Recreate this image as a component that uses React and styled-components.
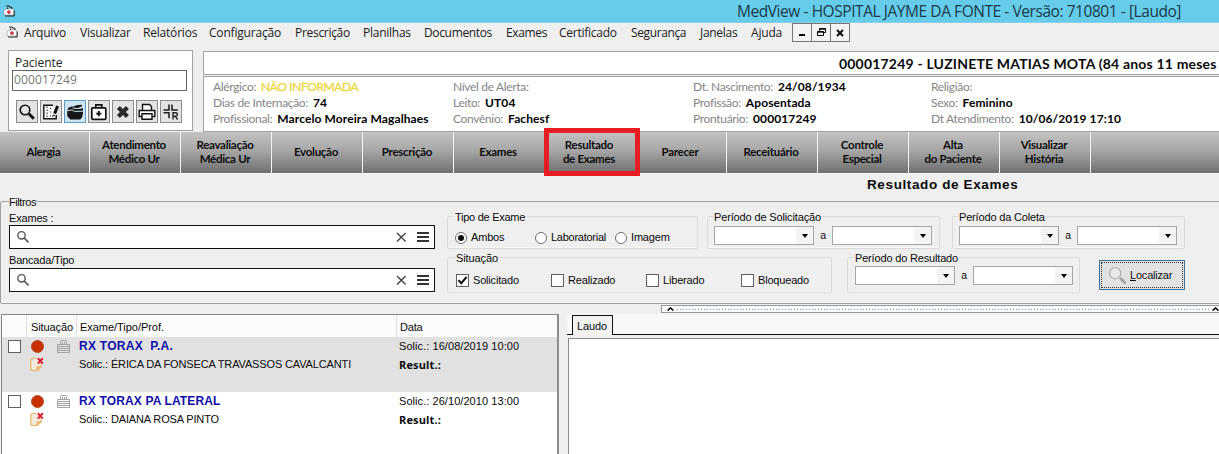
import React from 'react';
import styled, { createGlobalStyle, css } from 'styled-components';

const Global = createGlobalStyle`
  * { box-sizing: border-box; }
  html, body { margin: 0; padding: 0; background: #efefef; overflow: hidden; }
`;

const ui = '"Open Sans", "Noto Sans", sans-serif';
const humanist = 'Lato, "Open Sans", sans-serif';
const classic = '"Liberation Sans", Arial, sans-serif';

const Window = styled.main`
  width: 1219px;
  height: 454px;
  overflow: hidden;
  display: flex;
  flex-direction: column;
  background: #efefef;
  color: #0a0a0a;
  font: 11px/13px ${classic};
  letter-spacing: -0.18px;
  white-space: pre;
`;
const Label = styled.span`
  letter-spacing: ${p => p.$ls ?? -0.18}px;
`;

/* ---- title bar and menu ---- */
const TitleBar = styled.header`
  flex: none;
  display: flex;
  align-items: center;
  height: 23px;
  padding-left: 3px;
  background: #67cbea;
  border-bottom: 1px solid #8ccfe4;
`;
const Title = styled.h1`
  margin: 0 0 0 722px;
  font: 400 15.5px/22px ${ui};
  letter-spacing: -0.44px;
  color: #173c4b;
`;
const MenuBar = styled.nav`
  flex: none;
  display: flex;
  height: 27px;
  padding-left: 6px;
  font: 12px/20px ${ui};
  color: #1a1a1a;
`;
const MenuIcon = styled.span`
  width: 18px;
  padding-top: 3px;
  line-height: 0;
`;
const MenuItem = styled.span`
  width: ${p => p.$w}px;
  letter-spacing: ${p => p.$ls}px;
`;
const WindowButton = styled.span`
  display: grid;
  place-items: center;
  width: 20px;
  height: 19px;
  margin-right: -1px;
  border: 1px solid #777;
  background: #f3f3f3;
`;

/* ---- patient header ---- */
const PatientArea = styled.section`
  flex: none;
  display: flex;
  height: 82px;
`;
const PatientCard = styled.div`
  width: 185px;
  height: 81px;
  margin-left: 8px;
  padding: 5px 5px 0 3px;
  border: 1px solid #a2a2a2;
  background: #fff;
  font: 12px/14px ${ui};
`;
const PatientCaption = styled.div`
  padding-left: 3px;
  color: #222;
  letter-spacing: -0.05px;
`;
const PatientCode = styled.div`
  height: 21px;
  padding-left: 1px;
  border: 1px solid #666;
  color: #777;
  font: 12px/18px ${ui};
  letter-spacing: 0.14px;
`;
const ToolRow = styled.div`
  display: flex;
  gap: 2px;
  padding: 9px 0 0 4px;
`;
const ToolButton = styled.span`
  display: grid;
  place-items: center;
  width: 22px;
  height: 23px;
  border: 1px solid ${p => (p.$active ? '#5d9cc4' : '#8a8a8a')};
  background: ${p => (p.$active ? '#cfe4f3' : '#e3e3e3')};
`;
const PatientSummary = styled.div`
  flex: 1;
  margin: 1px 0 0 10px;
`;
const SummaryName = styled.div`
  height: 24px;
  padding-left: 635px;
  border: 1px solid #a2a2a2;
  border-right: 0;
  background: #fff;
  font: bold 14px/23px ${humanist};
  letter-spacing: 0.19px;
`;
const SummaryGrid = styled.div`
  display: grid;
  grid-template-columns: 240px 240px 238px 1fr;
  grid-auto-rows: 16.2px;
  height: 56px;
  margin-top: 1px;
  padding: 2px 0 0 9px;
  border: 1px solid #a2a2a2;
  border-right: 0;
  background: #fff;
  font: 12px/16px ${humanist};
  color: #000;
`;
const Fact = styled.div`
  display: flex;
  gap: 5px;
`;
const FactName = styled.span`
  color: #858585;
  letter-spacing: -0.33px;
`;
const FactValue = styled.span`
  font-weight: ${p => (p.$alert ? 400 : 700)};
  -webkit-text-stroke: ${p => (p.$alert ? '0.3px #ead73c' : '0')};
  color: ${p => (p.$alert ? '#ead73c' : '#000')};
  letter-spacing: ${p => (p.$alert ? -0.41 : 0.1)}px;
`;

/* ---- section tabs ---- */
const TabStrip = styled.nav`
  flex: none;
  display: flex;
  height: 42px;
  border-bottom: 1px solid #fafafa;
  background: linear-gradient(#c3c3c3, #a6a6a6 45%, #6f6f6f);
`;
const SectionTab = styled.div`
  position: relative;
  flex: none;
  display: grid;
  place-items: center;
  width: ${p => p.$w ?? 91}px;
  padding: 0 2px 1px 0;
  border-right: 1px solid #f4f4f4;
  text-align: center;
  font: bold 11.5px/14px ${humanist};
  letter-spacing: -0.28px;
  color: #0c0c0c;
  ${p => p.$marked && css`
    &::after {
      content: '';
      position: absolute;
      inset: -4px -5px -3px -1px;
      border: 5px solid #ec1c24;
      z-index: 1;
    }
  `}
`;
const PageTitle = styled.h2`
  flex: none;
  height: 19px;
  margin: 0;
  padding-left: 867px;
  font: bold 13.5px/21px ${classic};
  letter-spacing: 0.62px;
`;

/* ---- filters ---- */
const Group = styled.fieldset`
  flex: none;
  min-width: 0;
  margin: 0;
  padding: ${p => p.$pad ?? '2px 0 0 7px'};
  width: ${p => p.$w}px;
  height: ${p => p.$h ?? 39}px;
  border: 1px solid ${p => p.$line ?? '#dadada'};
  border-radius: 2px;
  box-shadow: inset 0 -1px 0 #f8f8f8;
`;
const Legend = styled.legend`
  padding: ${p => p.$top ?? 1}px 0 0 0;
  height: ${p => p.$h ?? 13}px;
`;
const FilterColumns = styled.div`
  display: flex;
  gap: 12px;
`;
const SearchColumn = styled.div`
  width: 426px;
  line-height: 14px;
`;
const SearchCaption = styled.div`
  height: ${p => p.$h}px;
  padding-top: ${p => p.$top}px;
`;
const SearchBox = styled.div`
  display: flex;
  align-items: center;
  height: 24px;
  padding: 0 5px 0 6px;
  border: 1px solid #111;
  background: #fff;
  & > :nth-child(2) { margin-left: auto; }
`;
const FilterRows = styled.div`
  display: flex;
  flex-direction: column;
  gap: 2px;
`;
const FilterRow = styled.div`
  display: flex;
  gap: ${p => p.$gap}px;
`;
const OptionRow = styled.div`
  display: flex;
  align-items: center;
  height: ${p => p.$h}px;
`;
const Option = styled.label`
  display: flex;
  align-items: center;
  gap: 4px;
  width: ${p => p.$w}px;
`;
const Radio = styled.span`
  display: grid;
  place-items: center;
  width: 12px;
  height: 12px;
  border: 1px solid #707070;
  border-radius: 50%;
  background: #fff;
  &::after {
    content: '';
    width: 6px;
    height: 6px;
    border-radius: 50%;
    background: ${p => (p.$on ? '#111' : 'transparent')};
  }
`;
const Check = styled.span`
  flex: none;
  display: grid;
  place-items: center;
  width: 13px;
  height: 13px;
  border: 1px solid #606060;
  background: #fff;
`;
const RangeRow = styled.div`
  display: flex;
  align-items: center;
  font-size: 10.5px;
`;
const Combo = styled.span`
  display: flex;
  justify-content: flex-end;
  width: 100px;
  height: 19px;
  border: 1px solid #a6a6a6;
  background: #fff;
`;
const ComboArrow = styled.span`
  display: grid;
  place-items: center;
  width: 17px;
  background: #f4f4f4;
  &::after {
    content: '';
    border: 3.5px solid transparent;
    border-top: 4px solid #000;
    border-bottom: 0;
  }
`;
const RangeWord = styled.span`
  width: 18px;
  text-align: center;
`;
const FindButton = styled.button`
  width: 86px;
  height: 30px;
  margin: 9px 0 0 4px;
  padding: 1px;
  border: 1px solid #3f6f94;
  background: #e2e2e2;
  font: inherit;
  color: #111;
  letter-spacing: -0.2px;
`;
const FindFocus = styled.span`
  display: flex;
  align-items: center;
  gap: 3px;
  height: 100%;
  padding-left: 6px;
  border: 1px dotted #333;
`;

/* ---- results ---- */
const Results = styled.section`
  flex: 1;
  display: flex;
  min-height: 0;
`;
const ExamTable = styled.div`
  flex: none;
  width: 558px;
  margin: 10px 0 0 1px;
  border: 1px solid #858585;
  border-right: 2px solid #8d8d8d;
  border-bottom: 0;
  background: #fff;
`;
const HeadRow = styled.div`
  display: flex;
  height: 22px;
  line-height: 25px;
  background: #fbfbfb;
`;
const HeadCell = styled.span`
  width: ${p => p.$w}px;
  padding-left: ${p => p.$pad}px;
  border-right: 1px solid ${p => (p.$last ? 'transparent' : '#e1e1e1')};
`;
const ExamRow = styled.div`
  display: grid;
  grid-template-columns: 22px 27px 22px 320px 1fr;
  grid-template-rows: 18px 19px;
  align-items: center;
  height: ${p => (p.$selected ? 55 : 54)}px;
  padding-left: 6px;
  background: ${p => (p.$selected ? '#e1e1e1' : '#fff')};
`;
const StatusDot = styled.span`
  justify-self: start;
  width: 13px;
  height: 13px;
  margin-left: 1px;
  border-radius: 50%;
  border: 1px solid #b84a26;
  background: #c93000;
`;
const ExamName = styled.strong`
  font-size: 12px;
  letter-spacing: ${p => p.$ls}px;
  color: #1010a8;
`;
const ResultLabel = styled.strong`
  font: bold 11px/14px ${ui};
  letter-spacing: 0.14px;
`;
const NoteSlot = styled.span`
  grid-column: 2 / span 2;
  line-height: 0;
`;
const ReportPane = styled.div`
  flex: 1;
  display: flex;
  flex-direction: column;
  margin-left: 8px;
`;
const Splitter = styled.div`
  flex: none;
  display: flex;
  align-items: center;
  justify-content: space-between;
  gap: 3px;
  height: 8px;
  margin: 1px 0 0 94px;
  padding-left: 5px;
  border: 1px solid #9a9a9a;
  border-right: 0;
  background: #f7f9fb;
`;
const Dots = styled.span`
  flex: 1;
  height: 1px;
  background: repeating-linear-gradient(90deg, #7f9fbe 0 1px, transparent 1px 3px);
`;
const ReportTabs = styled.div`
  flex: none;
  display: flex;
  height: 21px;
  margin-top: 1px;
  background: #f8f8f8;
  &::before { content: ''; width: 5px; border-bottom: 1px solid #111; }
  &::after { content: ''; flex: 1; border-bottom: 1px solid #111; }
`;
const ReportTab = styled.span`
  width: 41px;
  height: 20px;
  margin-top: 1px;
  padding-left: 4px;
  border: 1px solid #111;
  border-bottom: 0;
  background: #f2f2f2;
  line-height: 20px;
`;
const ReportBody = styled.div`
  flex: 1;
  margin: 3px 0 0 1px;
  border: 1px solid #8c8c8c;
  border-width: 1px 0 0 1px;
  background: #fff;
`;

/* ---- drawings ---- */
const MedIcon = () => (
  <svg width="12" height="12" viewBox="0 0 12 12">
    <path d="M1 10V5.5L3 4h7l1 1.5V10z" fill="#fff" stroke="#8a9197" strokeWidth=".6" />
    <path d="M3 1h3.5v1.2H9V4M4.5 2.5V4M11.2 5.5V11H2" fill="none" stroke="#222" strokeWidth="1" />
    <path d="M4 7.2h3.8M5.9 5.3v3.8" stroke="#d33a44" strokeWidth="1.7" />
  </svg>
);
const SearchGlyph = () => (
  <svg width="14" height="14" viewBox="0 0 14 14" fill="none" stroke="#555" strokeWidth="1.4">
    <circle cx="5.5" cy="5.3" r="3.7" /><path d="M8.2 8l4.3 4.3" strokeWidth="1.7" />
  </svg>
);
const CrossGlyph = () => (
  <svg width="11" height="11" viewBox="0 0 11 11" stroke="#444" strokeWidth="1.4">
    <path d="M1 1l8.6 8.6M9.6 1L1 9.6" />
  </svg>
);
const ListIcon = styled.svg`
  margin-left: 10px;
`;
const ListGlyph = () => (
  <ListIcon width="12" height="11" viewBox="0 0 12 11" fill="#333">
    <path d="M0 0h12v2H0zM0 4h12v2H0zM0 8h12v2H0z" />
  </ListIcon>
);
const Tick = () => (
  <svg width="11" height="11" viewBox="0 0 11 11" fill="none" stroke="#111" strokeWidth="2">
    <path d="M1.5 5.2L4.2 8.2 9.6 2" />
  </svg>
);
const Lock = () => (
  <svg width="13" height="14" viewBox="0 0 13 14" fill="none" stroke="#a3a3a3">
    <path d="M3.5 5V2.5q0-1 1-1h4q1 0 1 1V5M5.5 3v2M7.5 3v2M.5 5.5h12v8H.5zM1 7.5h11M1 9.5h11M1 11.5h11" />
  </svg>
);
const Note = () => (
  <svg width="14" height="15" viewBox="0 0 14 15">
    <path d="M6 1.5H2q-1.2 0-1.2 1.2v9.6q0 1.2 1.2 1.2h5.2L11 10V7.5" fill="#f3e9dc" stroke="#e8b267" strokeWidth="1.2" />
    <path d="M7.2 13.3V10h3.6" fill="#f5c98a" stroke="#e5a54e" strokeWidth="1.1" />
    <path d="M7.8 1.2l5 5.4M12.8 1.2l-5 5.4" stroke="#dc1f32" strokeWidth="2" />
  </svg>
);
const Arrow = () => (
  <svg width="7" height="4" viewBox="0 0 7 4" fill="none" stroke="#000" strokeWidth="1.4"><path d="M.6 3.6L3.5 .9l2.9 2.7" /></svg>
);
const FindIcon = () => (
  <svg width="19" height="19" viewBox="0 0 19 19" fill="none" stroke="#b2b2b2">
    <circle cx="7.2" cy="7.2" r="5.6" strokeWidth="1.3" fill="#e9e9e9" />
    <path d="M11.5 11.5l2 1.8" strokeWidth="1.5" /><path d="M13.2 13.2l3.6 3.4" stroke="#a6a6a6" strokeWidth="3" strokeLinecap="round" />
  </svg>
);

const tools = [
  <g key="find" fill="none" stroke="#111"><circle cx="7" cy="7" r="4.8" strokeWidth="1.6" /><path d="M10.8 10.8l5 5" strokeWidth="3" /></g>,
  <g key="edit" fill="none" stroke="#111"><path d="M11 2.2H1.8v13.6h12.4V12" fill="#fff" strokeWidth="1.4" /><path d="M5 3.5V15" strokeDasharray="1.5 1.5" /><path d="M8 5.5h2M8 9h2M8 13h3" strokeDasharray="1 1" /><path d="M15.6 3l-3 7.6" strokeWidth="3" /><path d="M12.2 11.5l-.6 2" strokeWidth="1.2" /></g>,
  <g key="folder"><path d="M2.5 4.5L6 3.6q2.5.2 4-1.3l5.5-.6.8 1.6-4.5 1.2 5.2.6v5.2l-1 4.2-1.8 2H4.2L1.2 13V8z" fill="#161616" /><path d="M1.2 7.8l4.8-.9q2.4 2.4 5 1.4l6-.1M6.5 5l4.6.5 5.4-.4" fill="none" stroke="#cfe4f3" strokeWidth="1" /></g>,
  <g key="kit" fill="none" stroke="#111"><rect x="1.8" y="4.8" width="14" height="11.5" rx="1" fill="#fff" strokeWidth="1.7" /><path d="M5.8 4.5V1.8h6v2.7" strokeWidth="1.7" /><path d="M8.8 8v5.2M6.2 10.6h5.2" strokeWidth="1.9" /></g>,
  <g key="delete" fill="none" stroke="#2a2a2a"><path d="M4.4 4.6l9 9M13.4 4.6l-9 9" strokeWidth="4.2" /></g>,
  <g key="print" fill="#fff" stroke="#111" strokeWidth="1.4"><path d="M4.5 8V1.5h7l2 2V8" /><path d="M1.2 7.5h15.6v6H1.2z" /><path d="M4 10.8h10v5.4H4z" /></g>,
  <g key="plus" fill="none" stroke="#222" strokeWidth="1.6"><path d="M7 1.5V7H1.5M10 1.5V7h5.8M1.5 9.8H7v5.4" /><path d="M11 16.5V9.8h2.6q1.8 0 1.8 1.7t-1.8 1.7H11M13.3 13.2l2.3 3.3" strokeWidth="1.4" /></g>,
];

const menu = [['Arquivo', 56, -0.21], ['Visualizar', 63, -0.25], ['Relatórios', 66, -0.2], ['Configuração', 86, -0.19], ['Prescrição', 68, -0.3], ['Planilhas', 61, -0.25], ['Documentos', 82, -0.35], ['Exames', 53, -0.35], ['Certificado', 72, -0.25], ['Segurança', 69, -0.39], ['Janelas', 51, -0.3], ['Ajuda', 41, -0.2]];
const facts = [
  ['Alérgico:', 'NÃO INFORMADA', true], ['Nível de Alerta:'], ['Dt. Nascimento:', '24/08/1934'], ['Religião:'],
  ['Dias de Internação:', '74'], ['Leito:', 'UT04'], ['Profissão:', 'Aposentada'], ['Sexo:', 'Feminino'],
  ['Profissional:', 'Marcelo Moreira Magalhaes'], ['Convênio:', 'Fachesf'], ['Prontuário:', '000017249'], ['Dt Atendimento:', '10/06/2019 17:10'],
];
const tabs = ['Alergia', 'Atendimento\nMédico Ur', 'Reavaliação\nMédica Ur', 'Evolução', 'Prescrição', 'Exames', 'Resultado\nde Exames', 'Parecer', 'Receituário', 'Controle\nEspecial', 'Alta\ndo Paciente', 'Visualizar\nHistória'];
const exams = [
  { name: 'RX TORAX  P.A.', ls: 0.27, by: 'ÉRICA DA FONSECA TRAVASSOS CAVALCANTI', at: '16/08/2019 10:00', selected: true },
  { name: 'RX TORAX PA LATERAL', ls: 0.14, by: 'DAIANA ROSA PINTO', at: '26/10/2010 13:00' },
];

const Search = () => (
  <SearchBox><SearchGlyph /><CrossGlyph /><ListGlyph /></SearchBox>
);
const DateRange = ({ title, height, pad, ls }) => (
  <Group $w={233} $h={height} $pad={pad}>
    <Legend><Label $ls={ls}>{title}</Label></Legend>
    <RangeRow>
      <Combo><ComboArrow /></Combo><RangeWord>a</RangeWord><Combo><ComboArrow /></Combo>
    </RangeRow>
  </Group>
);
const SecondRange = styled.div`
  margin-left: 3px;
`;

export default function App() {
  return (
    <Window>
      <Global />
      <TitleBar>
        <MedIcon />
        <Title>MedView - HOSPITAL JAYME DA FONTE - Versão: 710801 - [Laudo]</Title>
      </TitleBar>
      <MenuBar>
        <MenuIcon><MedIcon /></MenuIcon>
        {menu.map(([name, w, ls]) => <MenuItem key={name} $w={w} $ls={ls}>{name}</MenuItem>)}
        <WindowButton><svg width="8" height="9"><path d="M1 7h6" stroke="#000" strokeWidth="2" /></svg></WindowButton>
        <WindowButton><svg width="9" height="9" fill="none" stroke="#000"><path d="M2.5 3V.5h6v4H6.5M2.5 1.2h6M.5 3.5h6v4h-6zM.5 4.2h6" /></svg></WindowButton>
        <WindowButton><svg width="8" height="8" stroke="#000" strokeWidth="1.8"><path d="M1 1l6 6M7 1l-6 6" /></svg></WindowButton>
      </MenuBar>

      <PatientArea>
        <PatientCard>
          <PatientCaption>Paciente</PatientCaption>
          <PatientCode>000017249</PatientCode>
          <ToolRow>
            {tools.map((drawing, i) => (
              <ToolButton key={drawing.key} $active={i === 2}>
                <svg width="18" height="18" viewBox="0 0 18 18">{drawing}</svg>
              </ToolButton>
            ))}
          </ToolRow>
        </PatientCard>
        <PatientSummary>
          <SummaryName>000017249 - LUZINETE MATIAS MOTA (84 anos 11 meses</SummaryName>
          <SummaryGrid>
            {facts.map(([name, value, alert]) => (
              <Fact key={name}>
                <FactName>{name}</FactName>
                {value && <FactValue $alert={alert}>{value}</FactValue>}
              </Fact>
            ))}
          </SummaryGrid>
        </PatientSummary>
      </PatientArea>

      <TabStrip>
        {tabs.map((name, i) => (
          <SectionTab key={name} $w={i === 0 ? 90 : 91} $marked={name.startsWith('Resultado')}>{name}</SectionTab>
        ))}
      </TabStrip>
      <PageTitle>Resultado de Exames</PageTitle>

      <Group $w={1230} $h={111} $line="#a0a0a0" $pad="0 0 0 8px">
        <Legend $top={3} $h={17}><Label $ls={-0.42}>Filtros</Label></Legend>
        <FilterColumns>
          <SearchColumn>
            <SearchCaption $h={15} $top={1}>Exames :</SearchCaption>
            <Search />
            <SearchCaption $h={19} $top={4}>Bancada/Tipo</SearchCaption>
            <Search />
          </SearchColumn>
          <FilterRows>
            <FilterRow $gap={9}>
              <Group $w={251}>
                <Legend><Label $ls={-0.27}>Tipo de Exame</Label></Legend>
                <OptionRow $h={25}>
                  <Option $w={80}><Radio $on />Ambos</Option>
                  <Option $w={80}><Radio /><Label $ls={-0.26}>Laboratorial</Label></Option>
                  <Option><Radio />Imagem</Option>
                </OptionRow>
              </Group>
              <DateRange title="Período de Solicitação" pad="3px 0 0 6px" ls={-0.14} />
              <SecondRange>
                <DateRange title="Período da Coleta" pad="3px 0 0 6px" ls={-0.17} />
              </SecondRange>
            </FilterRow>
            <FilterRow $gap={15}>
              <Group $w={385} $h={42} $pad="2px 0 0 8px">
                <Legend><Label $ls={-0.1}>Situação</Label></Legend>
                <OptionRow $h={28}>
                  <Option $w={95}><Check><Tick /></Check>Solicitado</Option>
                  <Option $w={95}><Check />Realizado</Option>
                  <Option $w={95}><Check />Liberado</Option>
                  <Option><Check />Bloqueado</Option>
                </OptionRow>
              </Group>
              <DateRange title="Período do Resultado" height={42} ls={-0.17} />
              <FindButton>
                <FindFocus><FindIcon /><span><u>L</u>ocalizar</span></FindFocus>
              </FindButton>
            </FilterRow>
          </FilterRows>
        </FilterColumns>
      </Group>

      <Results>
        <ExamTable>
          <HeadRow>
            <HeadCell $w={25} />
            <HeadCell $w={50} $pad={4}><Label $ls={-0.1}>Situação</Label></HeadCell>
            <HeadCell $w={320} $pad={3}><Label $ls={-0.04}>Exame/Tipo/Prof.</Label></HeadCell>
            <HeadCell $w={150} $pad={3} $last>Data</HeadCell>
          </HeadRow>
          {exams.map(exam => (
            <ExamRow key={exam.name} $selected={exam.selected}>
              <Check />
              <StatusDot />
              <Lock />
              <ExamName $ls={exam.ls}>{exam.name}</ExamName>
              <Label $ls={0.06}>Solic.: {exam.at}</Label>
              <NoteSlot><Note /></NoteSlot>
              <Label $ls={-0.14}>Solic.: {exam.by}</Label>
              <ResultLabel>Result.:</ResultLabel>
            </ExamRow>
          ))}
        </ExamTable>
        <ReportPane>
          <Splitter><Arrow /><Dots /><Arrow /></Splitter>
          <ReportTabs><ReportTab><Label $ls={-0.12}>Laudo</Label></ReportTab></ReportTabs>
          <ReportBody />
        </ReportPane>
      </Results>
    </Window>
  );
}
